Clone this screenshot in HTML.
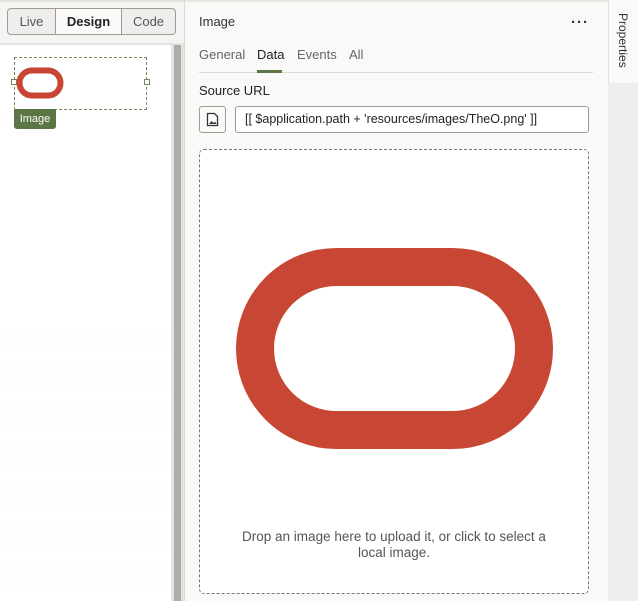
<!DOCTYPE html>
<html><head><meta charset="utf-8"><style>
*{box-sizing:border-box;margin:0;padding:0}
body{width:638px;height:601px;overflow:hidden;background:#fbf9f8;font-family:"Liberation Sans",sans-serif;position:relative;color:#161513}
.abs{position:absolute}
</style></head><body>
<div class="abs" style="left:0;top:0;width:184px;height:601px;background:#f5f4f2"></div>
<div class="abs" style="left:0;top:0;width:184px;height:2px;background:#e4e2df"></div>
<div class="abs" style="left:7px;top:8px;width:169px;height:27px;border:1px solid #9e9b97;border-radius:4px;background:#efeeec;display:flex;font-size:13px;overflow:hidden">
 <div style="width:47px;text-align:center;line-height:25px;color:#555">Live</div>
 <div style="width:67px;text-align:center;line-height:25px;background:#fbfaf9;border-left:1px solid #9e9b97;border-right:1px solid #9e9b97;font-weight:bold;color:#222">Design</div>
 <div style="flex:1;text-align:center;line-height:25px;color:#555">Code</div>
</div>
<div class="abs" style="left:0;top:43px;width:184px;height:2px;background:#e6e4e1"></div>
<div class="abs" style="left:0;top:45px;width:171px;height:556px;background:#fff"></div>
<div class="abs" style="left:0;top:325px;width:171px;height:276px;background-image:repeating-linear-gradient(0deg,transparent 0 9px,rgba(0,0,0,0.015) 9px 10px)"></div>
<div class="abs" style="left:171px;top:45px;width:13px;height:556px;background:#e5e3e0"></div>
<div class="abs" style="left:174px;top:45px;width:7px;height:556px;background:#aeaca8"></div>
<div class="abs" style="left:184px;top:0;width:1px;height:601px;background:#dcdad7"></div>
<div class="abs" style="left:14px;top:57px;width:133px;height:53px;border:1px dashed #6f8a5a"></div>
<div class="abs" style="left:11px;top:79px;width:6px;height:6px;border:1px solid #6f8a5a;background:#fff"></div>
<div class="abs" style="left:144px;top:79px;width:6px;height:6px;border:1px solid #6f8a5a;background:#fff"></div>
<svg class="abs" style="left:16px;top:67px" width="48" height="32"><rect x="3.5" y="3.5" width="41" height="25" rx="12.5" fill="none" stroke="#c74634" stroke-width="6"/></svg>
<div class="abs" style="left:14px;top:109px;width:42px;height:20px;background:#5b7543;border-radius:0 0 3px 3px;color:#fff;font-size:11px;text-align:center;line-height:20px">Image</div>
<div class="abs" style="left:185px;top:0;width:423px;height:2px;background:#e8e6e3"></div>
<div class="abs" style="left:199px;top:14px;font-size:13px;color:#333">Image</div>
<div class="abs" style="left:571px;top:14px;font-size:15px;font-weight:bold;color:#333;letter-spacing:1px">···</div>
<div class="abs" style="left:199px;top:47px;font-size:13px;color:#666">General</div>
<div class="abs" style="left:257px;top:47px;font-size:13px;color:#222">Data</div>
<div class="abs" style="left:297px;top:47px;font-size:13px;color:#666">Events</div>
<div class="abs" style="left:349px;top:47px;font-size:13px;color:#666">All</div>
<div class="abs" style="left:199px;top:72px;width:394px;height:1px;background:#dcdad7"></div>
<div class="abs" style="left:257px;top:70px;width:25px;height:3px;background:#5b7543"></div>
<div class="abs" style="left:199px;top:83px;font-size:13px;color:#222">Source URL</div>
<div class="abs" style="left:199px;top:106px;width:27px;height:27px;border:1px solid #9e9b97;border-radius:3px;background:#fbf9f8"></div>
<svg class="abs" style="left:206px;top:112px" width="13" height="15"><path d="M1.5 1.5h7l3 3v9h-10z" fill="#fff" stroke="#333" stroke-width="1.3"/><path d="M3 12l2.5-3 2 2 1.5-1.5 1.5 2.5z" fill="#333"/></svg>
<div class="abs" style="left:235px;top:106px;width:354px;height:27px;border:1px solid #9e9b97;border-radius:3px;background:#fff;font-size:12.5px;line-height:25px;padding-left:9px;color:#222">[[ $application.path + 'resources/images/TheO.png' ]]</div>
<div class="abs" style="left:199px;top:149px;width:390px;height:445px;border:1px dashed #777;border-radius:5px;background:#fff"></div>
<svg class="abs" style="left:236px;top:248px" width="317" height="201"><rect x="19" y="19" width="279" height="163" rx="81.5" fill="none" stroke="#c74634" stroke-width="38"/></svg>
<div class="abs" style="left:199px;top:529px;width:390px;text-align:center;font-size:13.5px;color:#555;line-height:16px">Drop an image here to upload it, or click to select a<br>local image.</div>
<div class="abs" style="left:608px;top:83px;width:30px;height:518px;background:#efeeec"></div>
<div class="abs" style="left:608px;top:0;width:1px;height:83px;background:#e4e2df"></div>
<div class="abs" style="left:596px;top:33px;width:54px;transform:rotate(90deg);font-size:12px;color:#333;text-align:center;line-height:14px">Properties</div>
</body></html>
